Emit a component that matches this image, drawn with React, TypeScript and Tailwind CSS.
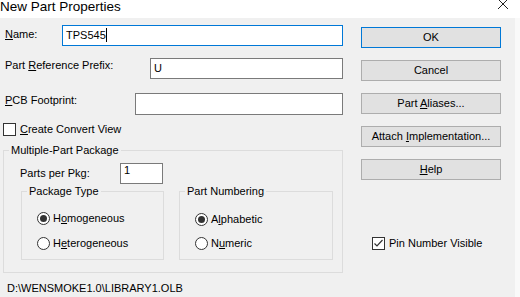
import { ReactNode } from "react";

function U({ children }: { children: string }) {
  return <span className="underline underline-offset-[1px]">{children}</span>
}

function Button({ children, primary }: { children: ReactNode; primary?: boolean }) {
  return <button className={primary
    ? "h-[21px] w-[140px] bg-[#e1e1e1] border border-[#0078d7] text-[11px] leading-[13px]"
    : "h-[21px] w-[140px] bg-[#e1e1e1] border border-[#adadad] text-[11px] leading-[13px]"}>
    {children}
  </button>
}

function Check({ checked, children }: { checked?: boolean; children: ReactNode }) {
  return <div className="flex items-center gap-[4px] h-[13px]">
    <span className="w-[13px] h-[13px] border border-[#333333] bg-white flex items-center justify-center shrink-0">
      {checked && <svg width="11" height="11" viewBox="0 0 11 11">
        <polyline points="1.5,5.5 4,8 9.5,2" fill="none" stroke="#333333" strokeWidth="1.2" />
      </svg>}
    </span>
    <span className="leading-[13px]">{children}</span>
  </div>
}

function Radio({ checked, children }: { checked?: boolean; children: ReactNode }) {
  return <div className="flex items-center gap-[3px] h-[13px]">
    <span className="w-[13px] h-[13px] rounded-full border border-[#333333] bg-white flex items-center justify-center shrink-0">
      {checked && <span className="w-[7px] h-[7px] rounded-full bg-[#333333]" />}
    </span>
    <span className="leading-[13px]">{children}</span>
  </div>
}

function Group({ label, className, children }: { label: string; className: string; children: ReactNode }) {
  return <div className={"relative border border-[#dcdcdc] " + className}>
    {/** legend sits over the top border */}
    <span className="absolute -top-[7px] left-[5px] px-[2px] bg-[#f0f0f0] leading-[13px]">{label}</span>
    {children}
  </div>
}

export default function App() {
  return <div className="w-[520px] h-[297px] bg-[#f0f0f0] flex flex-col overflow-hidden text-[11px] text-black font-['Liberation_Sans',Arial,sans-serif]">
    {/** title bar */}
    <div className="h-[18px] bg-white flex justify-between shrink-0 overflow-hidden">
      <div className="text-[13.5px] leading-[14px]">New Part Properties</div>
      <svg width="12" height="12" viewBox="0 0 12 12" className="mr-[11px] -mt-[2px]">
        <path d="M1 1 L11 11 M11 1 L1 11" stroke="#222222" strokeWidth="1" />
      </svg>
    </div>

    <div className="flex flex-1">
      <div className="w-[515px] flex flex-col">
        <div className="flex flex-1">
          {/** left column */}
          <div className="w-[343px] flex flex-col">
            <div className="mt-[7px] h-[21px] flex">
              <div className="w-[62px] pl-[5px] pt-[3px] leading-[13px]"><U>N</U>ame:</div>
              <div className="flex-1 h-[21px] bg-white border border-[#0078d7] pl-[3px] leading-[19px] flex">
                <span>TPS545</span><span className="w-[1px] h-[14px] bg-black mt-[2px]" />
              </div>
            </div>
            <div className="mt-[12px] h-[21px] flex">
              <div className="w-[150px] pl-[5px] pt-[1px] leading-[13px]">Part <U>R</U>eference Prefix:</div>
              <div className="flex-1 h-[21px] bg-white border border-[#7a7a7a] pl-[3px] leading-[19px]">U</div>
            </div>
            <div className="mt-[14px] h-[22px] flex">
              <div className="w-[135px] pl-[5px] pt-[1px] leading-[13px]"><U>P</U>CB Footprint:</div>
              <div className="flex-1 h-[22px] bg-white border border-[#7a7a7a]" />
            </div>
            <div className="mt-[8px] pl-[3px]">
              <Check><U>C</U>reate Convert View</Check>
            </div>

            <Group label="Multiple-Part Package" className="mt-[14px] ml-[3px] w-[340px] h-[123px]">
              <div className="mt-[12px] flex items-center h-[21px]">
                <div className="w-[116px] pl-[16px] leading-[13px]">Parts per Pk<U>g</U>:</div>
                <div className="w-[43px] h-[21px] bg-white border border-[#7a7a7a] pl-[3px] leading-[13px]">1</div>
              </div>
              <div className="mt-[7px] flex pl-[17px]">
                <Group label="Package Type" className="w-[143px] h-[69px]">
                  <div className="flex flex-col gap-[12px] pt-[20px] pl-[15px]">
                    <Radio checked>H<U>o</U>mogeneous</Radio>
                    <Radio>H<U>e</U>terogeneous</Radio>
                  </div>
                </Group>
                <Group label="Part Numbering" className="ml-[15px] w-[154px] h-[69px]">
                  <div className="flex flex-col gap-[11px] pt-[21px] pl-[15px]">
                    <Radio checked>A<U>l</U>phabetic</Radio>
                    <Radio>N<U>u</U>meric</Radio>
                  </div>
                </Group>
              </div>
            </Group>
          </div>

          {/** right column */}
          <div className="ml-[18px] w-[140px] flex flex-col pt-[9px]">
            <div className="flex flex-col gap-[12px]">
              <Button primary>OK</Button>
              <Button>Cancel</Button>
              <Button>Part <U>A</U>liases...</Button>
              <Button>Attach <U>I</U>mplementation...</Button>
              <Button><U>H</U>elp</Button>
            </div>
            <div className="mt-[57px] ml-[11px]">
              <Check checked>Pin Number Visible</Check>
            </div>
          </div>
        </div>

        {/** footer */}
        <div className="h-[16px] pl-[7px] pt-[1px] leading-[13px] shrink-0">D:\WENSMOKE1.0\LIBRARY1.OLB</div>
      </div>
      <div className="w-[5px] bg-[#f9f9f9]" />
    </div>
  </div>
}
